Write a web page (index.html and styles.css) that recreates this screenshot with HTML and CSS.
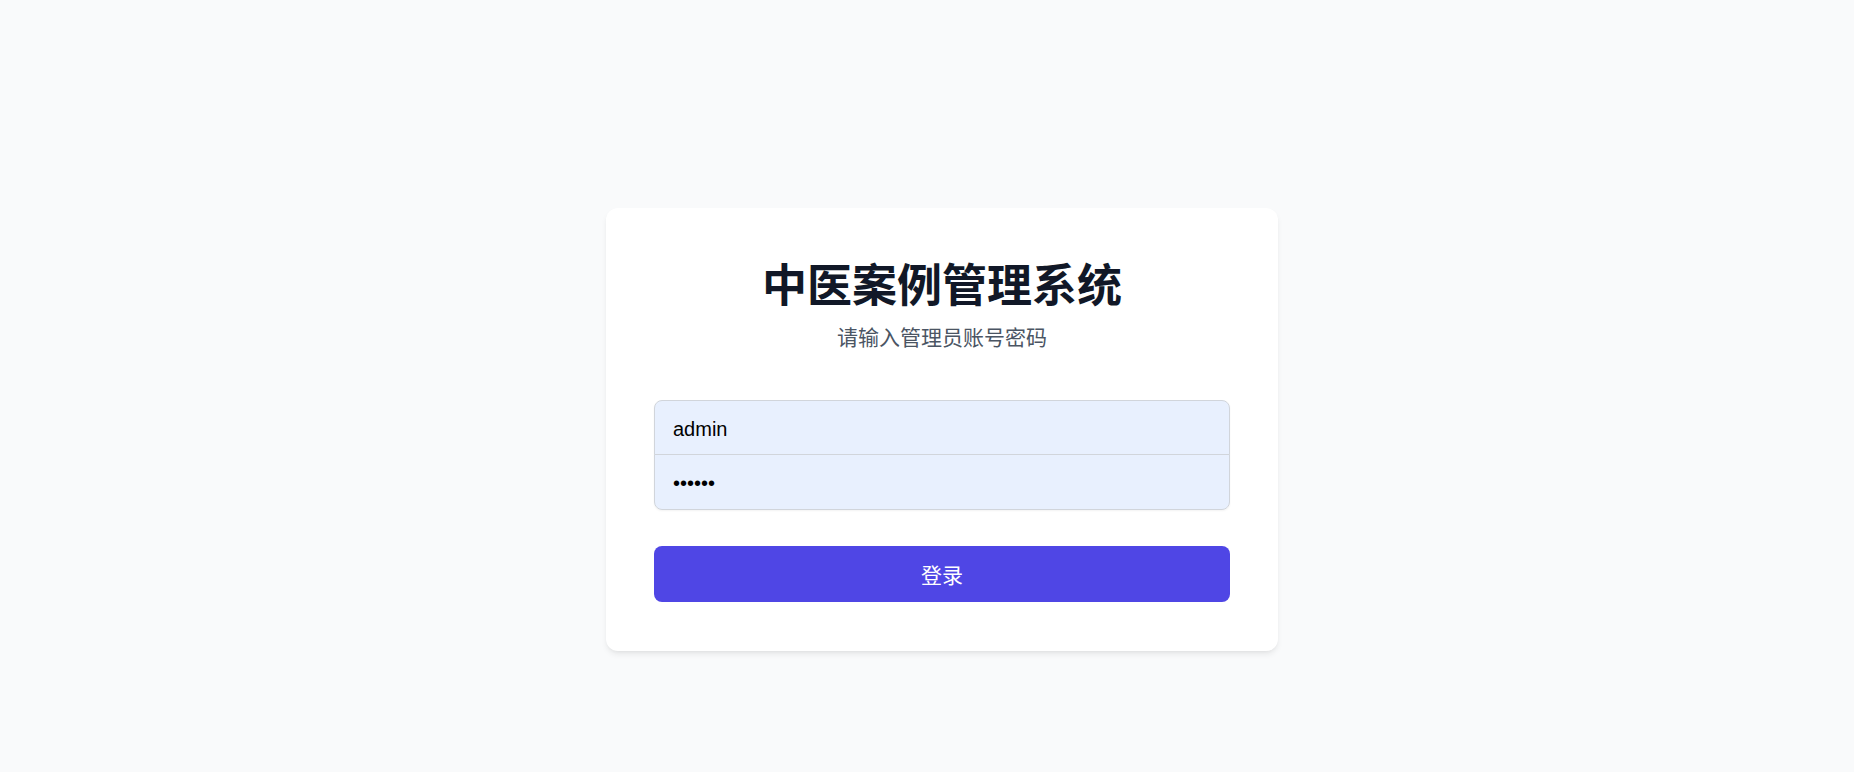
FILE: index.html
```html
<!DOCTYPE html>
<html lang="zh-CN">
<head>
<meta charset="utf-8">
<title>中医案例管理系统</title>
<link rel="stylesheet" href="styles.css">
</head>
<body>
<main class="page">
  <section class="card">
    <header class="head">
      <h1 class="title">中医案例管理系统</h1>
      <p class="subtitle">请输入管理员账号密码</p>
    </header>
    <form class="form">
      <div class="fields">
        <input class="field field-top" type="text" value="admin" aria-label="用户名">
        <input class="field field-bottom" type="password" value="123456" aria-label="密码">
      </div>
      <button class="submit" type="button">登录</button>
    </form>
  </section>
</main>
</body>
</html>
```
FILE: styles.css
```css
* { box-sizing: border-box; }
html, body { margin: 0; padding: 0; }
body {
  background: #f9fafb;
  font-family: "Noto Sans CJK SC", "Liberation Sans", sans-serif;
  min-height: 772px;
}
.page {
  display: flex;
  justify-content: center;
  padding: 208px 0 0 30px;
}
.card {
  width: 672px;
  background: #ffffff;
  border-radius: 12px;
  box-shadow: 0 4px 6px -1px rgba(0,0,0,0.08), 0 2px 4px -2px rgba(0,0,0,0.06);
  padding: 48px 48px 49px;
}
.head {
  display: flex;
  flex-direction: column;
  align-items: center;
  gap: 10px;
}
.title {
  margin: 0;
  font-size: 45px;
  line-height: 54px;
  font-weight: 700;
  color: #111827;
}
.subtitle {
  margin: 0;
  font-size: 21px;
  line-height: 32px;
  color: #4b5563;
}
.form {
  margin-top: 48px;
  display: flex;
  flex-direction: column;
  gap: 36px;
}
.fields {
  display: flex;
  flex-direction: column;
  border-radius: 8px;
  box-shadow: 0 1px 2px rgba(0,0,0,0.05);
}
.field {
  display: block;
  width: 100%;
  height: 55px;
  margin: 0;
  padding: 3px 18px 0;
  border: 1px solid #d1d5db;
  background: #e8f0fe;
  font-family: "Liberation Sans", Arial, sans-serif;
  font-size: 20px;
  color: #000000;
  outline: none;
}
.field-top { border-radius: 8px 8px 0 0; }
.field-bottom { border-radius: 0 0 8px 8px; margin-top: -1px; height: 56px; }
.submit {
  display: flex;
  align-items: center;
  justify-content: center;
  height: 56px;
  width: 100%;
  border: none;
  border-radius: 8px;
  background: #4f46e5;
  color: #ffffff;
  font-family: "Noto Sans CJK SC", sans-serif;
  font-size: 21px;
  cursor: pointer;
}
```
